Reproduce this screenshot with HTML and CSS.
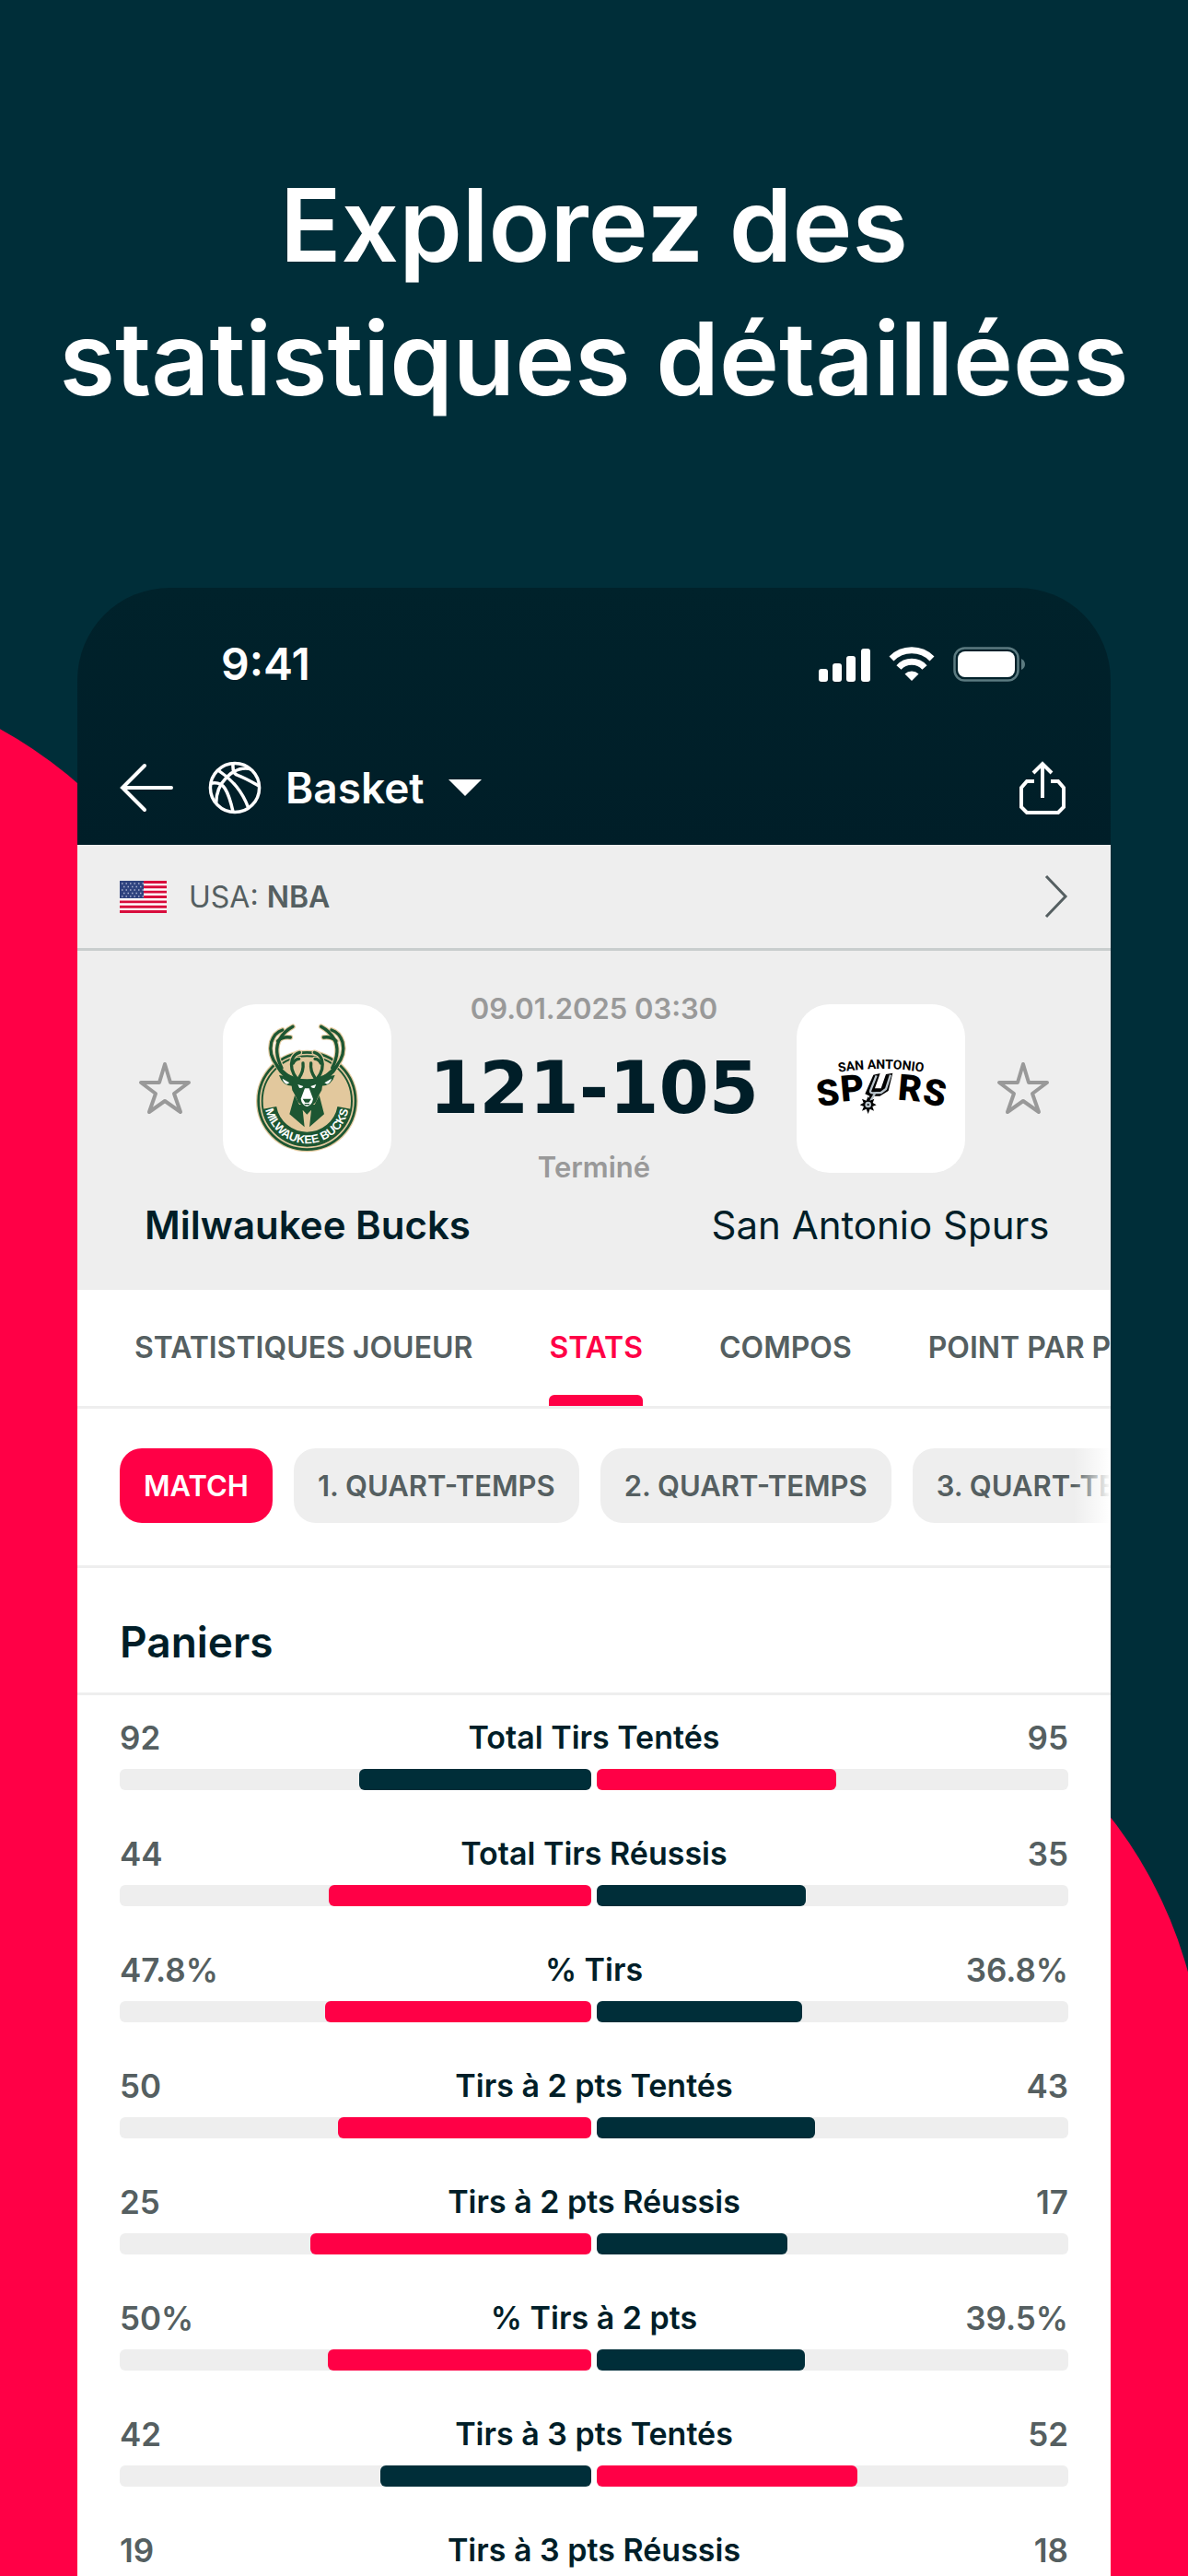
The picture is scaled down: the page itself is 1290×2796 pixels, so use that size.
FILE: index.html
```html
<!DOCTYPE html>
<html lang="fr">
<head>
    <meta charset="UTF-8">
    <meta name="viewport" content="width=device-width, initial-scale=1.0">
    <title>Statistiques détaillées</title>
    <link rel="stylesheet" href="styles.css">
</head>
<body>

<div class="stage">
    <h1>Explorez des<br>statistiques détaillées</h1>

    <main class="phone">
        <header class="top">
            <div class="status">
                <span class="time">9:41</span>
                <div class="status-icons">
                    <svg width="56" height="38" viewBox="0 0 56 38" fill="#fff">
                        <rect x="0" y="24" width="10" height="14" rx="3"/>
                        <rect x="15" y="18" width="10" height="20" rx="3"/>
                        <rect x="30" y="10" width="10" height="28" rx="3"/>
                        <rect x="46" y="2" width="10" height="36" rx="3"/>
                    </svg>
                    <svg width="50" height="38" viewBox="0 0 50 38" fill="none" stroke="#fff" stroke-width="7">
                        <path d="M3 13A31 31 0 0 1 47 13"/>
                        <path d="M11 22.500A19 19 0 0 1 39 22.500"/>
                        <path d="M25 37L17.500 29.500A11 11 0 0 1 32.500 29.500Z" fill="#fff" stroke="none"/>
                    </svg>
                    <svg width="78" height="38" viewBox="0 0 78 38">
                        <rect x="1.500" y="1.500" width="69" height="35" rx="11" fill="none" stroke="#5b7a80" stroke-width="2.500"/>
                        <rect x="5" y="5" width="62" height="28" rx="8" fill="#fff"/>
                        <path d="M74 13q4 2 4 6t-4 6z" fill="#5b7a80"/>
                    </svg>
                </div>
            </div>
            <nav class="nav">
                <button class="icon-btn" aria-label="Retour">
                    <svg width="58" height="58" viewBox="0 0 58 58" fill="none" stroke="#fff" stroke-width="4" stroke-linecap="round">
                        <path d="M27 5L3 29L27 53M3 29H56"/>
                    </svg>
                </button>
                <button class="sport">
                    <svg width="58" height="58" viewBox="0 0 60 60" fill="none" stroke="#fff" stroke-width="3.600">
                        <circle cx="30" cy="30" r="27.500"/>
                        <path d="M3 25Q14 23 19 31T28 57"/>
                        <path d="M12 11Q24 19 32 29T45 52"/>
                        <path d="M9 47Q9 30 21 18T48 9"/>
                        <path d="M28 3Q27 14 33 16T57 28"/>
                    </svg>
                    <span>Basket</span>
                    <svg width="36" height="18" viewBox="0 0 36 18" fill="#fff"><path d="M0 0H36L18 18Z"/></svg>
                </button>
                <button class="icon-btn share" aria-label="Partager">
                    <svg width="50" height="58" viewBox="0 0 50 58" fill="none" stroke="#fff" stroke-width="4">
                        <path d="M16 22H8L2 29V50L8 56H42L48 50V29L42 22H34"/>
                        <path d="M25 40V3M15 13L25 3L35 13"/>
                    </svg>
                </button>
            </nav>
        </header>

        <a class="league" href="#">
            <svg width="51" height="35" viewBox="0 0 51 35">
                <rect width="51" height="35" fill="#fff"/>
                <path d="M0 1.500H51M0 6.800H51M0 12.100H51M0 17.500H51M0 22.900H51M0 28.200H51M0 33.500H51" stroke="#d80c3c" stroke-width="2.900"/>
                <rect width="26" height="19" fill="#2f437f"/>
                <path d="M2 3H26M4 6.500H26M2 10H26M4 13.500H26M2 17H26" stroke="#a9b3d2" stroke-width="1.500" stroke-dasharray="1.500 3"/>
            </svg>
            <span class="league-name">USA: <b>NBA</b></span>
            <svg width="26" height="48" viewBox="0 0 26 48" fill="none" stroke="#555f61" stroke-width="3"><path d="M2 2L23 24L2 46"/></svg>
        </a>

        <section class="match">
            <div class="match-row">
                <button class="icon-btn" aria-label="Suivre Milwaukee Bucks">
                    <svg width="58" height="58" viewBox="0 0 58 58" fill="none" stroke="#999" stroke-width="4" stroke-linejoin="round">
                        <path d="M29 3L35 23H55L39 35L46 55L29 43L12 55L19 35L3 23H23Z"/>
                    </svg>
                </button>
                <div class="logo">
                    <svg viewBox="337 88 547 549" role="img" aria-label="Milwaukee Bucks">
                        <circle cx="610" cy="403" r="166" fill="#e2c89d"/>
                        <circle cx="610" cy="403" r="158" fill="none" stroke="#1c5632" stroke-width="8"/>
                        <circle cx="610" cy="403" r="146" fill="none" stroke="#1c5632" stroke-width="6"/>
                        <path d="M489 425A123 123 0 0 0 731 425" fill="none" stroke="#1c5632" stroke-width="44"/>
                        <path id="bucksArc" d="M475 432A138 138 0 0 0 745 432" fill="none"/>
                        <text class="bucks-text"><textPath href="#bucksArc" startOffset="50%">MILWAUKEE BUCKS</textPath></text>
                        <defs>
                            <g id="antler">
                                <path d="M582 340C530 315 480 270 494 212Q504 180 530 172"/>
                                <path d="M528 296Q500 240 521 202Q536 176 564 161"/>
                                <path d="M515 208Q530 192 556 196"/>
                                <path d="M578 332Q552 300 562 268Q568 250 586 245"/>
                                <path d="M565 280Q572 266 584 266"/>
                                <path d="M584 328Q600 305 597 280"/>
                            </g>
                        </defs>
                        <g fill="none" stroke="#e2c89d" stroke-width="17" stroke-linecap="round">
                            <use href="#antler"/>
                            <use href="#antler" transform="translate(1220 0) scale(-1 1)"/>
                        </g>
                        <g fill="none" stroke="#1c5632" stroke-width="10" stroke-linecap="round">
                            <use href="#antler"/>
                            <use href="#antler" transform="translate(1220 0) scale(-1 1)"/>
                        </g>
                        <path d="M500 270Q520 310 570 324Q610 340 650 324Q700 310 720 270Q708 315 662 340L658 368Q645 390 640 405Q625 422 610 422Q595 422 580 405Q575 390 562 368L558 340Q512 315 500 270Z" fill="#1c5632"/>
                        <path d="M519 319L565 326L562 354Q530 354 519 319ZM701 319L655 326L658 354Q690 354 701 319Z" fill="#1c5632"/>
                        <path d="M530 330L553 344L545 348Q533 344 530 330ZM690 330L667 344L675 348Q687 344 690 330Z" fill="#fff"/>
                        <path d="M570 384L553 446L602 488L596 432L610 447L624 432L618 488L666 446L650 384L635 415H585Z" fill="#1c5632"/>
                        <path d="M603 362H617L630 396Q627 416 610 421Q593 416 590 396Z" fill="#fff"/>
                        <path d="M596 396H624L616 408H604ZM602 412H618V416H602Z" fill="#1c5632"/>
                        <path d="M580 349L598 355Q594 363 585 360ZM640 349L622 355Q626 363 635 360Z" fill="#fff"/>
                    </svg>
                </div>
                <div class="result">
                    <span class="muted">09.01.2025 03:30</span>
                    <strong class="score">121-105</strong>
                    <span class="muted">Terminé</span>
                </div>
                <div class="logo">
                    <svg viewBox="76 88 547 549" role="img" aria-label="San Antonio Spurs">
                        <path id="spursArc" d="M198 312Q350 284 502 312" fill="none"/>
                        <text class="spurs-city"><textPath href="#spursArc" startOffset="50%">SAN ANTONIO</textPath></text>
                        <g class="spurs-text">
                            <text x="176" y="417" transform="rotate(-9 176 375)">S</text>
                            <text x="256" y="402" transform="rotate(-5 256 360)">P</text>
                            <text x="445" y="402" transform="rotate(5 445 360)">R</text>
                            <text x="525" y="417" transform="rotate(9 525 375)">S</text>
                        </g>
                        <path d="M325 318L347 313L330 362H350L366 316L388 312L374 370L346 387H326L316 407L305 403L313 387L298 380Z" fill="#000"/>
                        <path d="M335 320L316 368Q312 376 322 377L350 376L366 364L381 318M330 379L310 412" fill="none" stroke="#b9c4cb" stroke-width="7"/>
                        <path d="M308 388L314 402L328 396L323 409L335 416L322 421L327 435L314 429L308 445L302 429L288 435L294 421L281 416L293 409L288 396L302 402Z" fill="#000"/>
                        <circle cx="308" cy="415" r="10" fill="#b9c4cb"/>
                        <circle cx="308" cy="415" r="3" fill="#000"/>
                    </svg>
                </div>
                <button class="icon-btn" aria-label="Suivre San Antonio Spurs">
                    <svg width="58" height="58" viewBox="0 0 58 58" fill="none" stroke="#999" stroke-width="4" stroke-linejoin="round">
                        <path d="M29 3L35 23H55L39 35L46 55L29 43L12 55L19 35L3 23H23Z"/>
                    </svg>
                </button>
            </div>
            <div class="teams">
                <span class="winner">Milwaukee Bucks</span>
                <span>San Antonio Spurs</span>
            </div>
        </section>

        <nav class="tabs">
            <a href="#">STATISTIQUES JOUEUR</a>
            <a href="#" class="active">STATS</a>
            <a href="#">COMPOS</a>
            <a href="#">POINT PAR POINT</a>
        </nav>

        <div class="filters">
            <button class="chip selected">MATCH</button>
            <button class="chip">1. QUART-TEMPS</button>
            <button class="chip">2. QUART-TEMPS</button>
            <button class="chip">3. QUART-TEMPS</button>
        </div>

        <h2>Paniers</h2>

        <section class="stats">
            <div class="stat">
                <div class="stat-text"><span>92</span><span class="label">Total Tirs Tentés</span><span>95</span></div>
                <div class="bars"><div class="bar home"><i style="width: 49.2%"></i></div><div class="bar"><i class="best" style="width: 50.8%"></i></div></div>
            </div>
            <div class="stat">
                <div class="stat-text"><span>44</span><span class="label">Total Tirs Réussis</span><span>35</span></div>
                <div class="bars"><div class="bar home"><i class="best" style="width: 55.7%"></i></div><div class="bar"><i style="width: 44.3%"></i></div></div>
            </div>
            <div class="stat">
                <div class="stat-text"><span>47.8%</span><span class="label">% Tirs</span><span>36.8%</span></div>
                <div class="bars"><div class="bar home"><i class="best" style="width: 56.5%"></i></div><div class="bar"><i style="width: 43.5%"></i></div></div>
            </div>
            <div class="stat">
                <div class="stat-text"><span>50</span><span class="label">Tirs à 2 pts Tentés</span><span>43</span></div>
                <div class="bars"><div class="bar home"><i class="best" style="width: 53.8%"></i></div><div class="bar"><i style="width: 46.2%"></i></div></div>
            </div>
            <div class="stat">
                <div class="stat-text"><span>25</span><span class="label">Tirs à 2 pts Réussis</span><span>17</span></div>
                <div class="bars"><div class="bar home"><i class="best" style="width: 59.5%"></i></div><div class="bar"><i style="width: 40.5%"></i></div></div>
            </div>
            <div class="stat">
                <div class="stat-text"><span>50%</span><span class="label">% Tirs à 2 pts</span><span>39.5%</span></div>
                <div class="bars"><div class="bar home"><i class="best" style="width: 55.9%"></i></div><div class="bar"><i style="width: 44.1%"></i></div></div>
            </div>
            <div class="stat">
                <div class="stat-text"><span>42</span><span class="label">Tirs à 3 pts Tentés</span><span>52</span></div>
                <div class="bars"><div class="bar home"><i style="width: 44.7%"></i></div><div class="bar"><i class="best" style="width: 55.3%"></i></div></div>
            </div>
            <div class="stat">
                <div class="stat-text"><span>19</span><span class="label">Tirs à 3 pts Réussis</span><span>18</span></div>
                <div class="bars"><div class="bar home"><i class="best" style="width: 51.4%"></i></div><div class="bar"><i style="width: 48.6%"></i></div></div>
            </div>
        </section>
    </main>
</div>

</body>
</html>
```

FILE: styles.css
```css
* {
    box-sizing: border-box;
}
body {
    margin: 0;
    background-color: #002e39;
    color: #001e28;
    font-family: Inter, "Liberation Sans", sans-serif;
}
button {
    border: none;
    padding: 0;
    background: none;
    color: inherit;
    font: inherit;
    cursor: pointer;
}
a {
    color: inherit;
    text-decoration: none;
}
svg {
    display: block;
    flex: none;
}
.stage {
    position: relative;
    z-index: 0;
    height: 100vh;
    overflow: hidden;
    padding: 172px 84px 0;
}
/* red shapes behind the phone */
.stage::before,
.stage::after {
    content: "";
    position: absolute;
    z-index: -1;
    bottom: 0;
    width: 960px;
    background-color: #ff0046;
    border-radius: 480px 480px 0 0;
}
.stage::before {
    left: -711px;
    top: 732px;
}
.stage::after {
    right: -17px;
    top: 1787px;
}
h1 {
    margin: 0 -84px 176px;
    color: #fff;
    font-size: 110px;
    font-weight: 600;
    line-height: 145px;
    text-align: center;
}
.phone {
    overflow: hidden;
}

/* header */
.top {
    background: linear-gradient(#00222b, #001e28);
    border-radius: 100px 100px 0 0;
    color: #fff;
    padding-bottom: 33px;
}
.status {
    display: flex;
    align-items: center;
    justify-content: space-between;
    padding: 53px 93px 0 156px;
}
.time {
    font-size: 48px;
    font-weight: 600;
    line-height: 60px;
}
.status-icons {
    display: flex;
    align-items: center;
    gap: 20px;
}
.nav {
    display: flex;
    align-items: center;
    gap: 38px;
    padding: 75px 49px 0 46px;
}
.sport {
    display: flex;
    align-items: center;
    gap: 26px;
    font-size: 46px;
    font-weight: 600;
    line-height: 58px;
}
.share {
    margin-left: auto;
}
.league {
    display: flex;
    align-items: center;
    gap: 24px;
    height: 115px;
    padding: 0 46px;
    background-color: #eee;
    border-bottom: 3px solid #c8cdcd;
    color: #555f61;
    font-size: 32px;
}
.league-name {
    flex: 1;
}
.league b {
    font-weight: 600;
}

/* match */
.match {
    padding: 43px 0 44px;
    background-color: #eee;
}
.match-row {
    display: flex;
    align-items: center;
    gap: 34px;
    padding: 0 66px;
}
.logo {
    width: 183px;
    height: 183px;
    background-color: #fff;
    border-radius: 36px;
    overflow: hidden;
}
.logo svg {
    width: 100%;
    height: 100%;
}
.bucks-text {
    fill: #fff;
    font: bold 38px "Liberation Sans", sans-serif;
    text-anchor: middle;
}
.spurs-city {
    font: bold 42px Roboto, sans-serif;
    text-anchor: middle;
}
.spurs-text {
    font: 900 118px Roboto, sans-serif;
    text-anchor: middle;
}
.result {
    flex: 1;
    display: flex;
    flex-direction: column;
    align-items: center;
    gap: 22px;
    margin: 0 -20px;
    white-space: nowrap;
}
.muted {
    color: #999;
    font-size: 31px;
    font-weight: 600;
    line-height: 40px;
}
.score {
    font-family: "DejaVu Sans", sans-serif;
    font-size: 78px;
    line-height: 88px;
}
.teams {
    display: grid;
    grid-template-columns: 1fr 1fr;
    gap: 122px;
    margin-top: 17px;
    font-size: 42px;
    line-height: 52px;
    text-align: center;
    white-space: nowrap;
}
.winner {
    font-weight: 600;
}

/* tabs and period filters */
.tabs {
    display: flex;
    gap: 83px;
    height: 129px;
    padding-left: 62px;
    background-color: #fff;
    border-bottom: 3px solid #eee;
    color: #555f61;
    font-size: 32px;
    font-weight: 600;
    line-height: 126px;
    white-space: nowrap;
}
.tabs .active {
    position: relative;
    color: #ff0046;
}
.tabs .active::after {
    content: "";
    position: absolute;
    left: 0;
    right: 0;
    bottom: 0;
    height: 12px;
    background-color: #ff0046;
    border-radius: 6px 6px 0 0;
}
.filters {
    position: relative;
    display: flex;
    gap: 23px;
    overflow: hidden;
    padding: 43px 0 46px 46px;
    background-color: #fff;
    border-bottom: 3px solid #eee;
}
.filters::after {
    content: "";
    position: absolute;
    top: 0;
    right: 0;
    bottom: 0;
    width: 40px;
    background: linear-gradient(to right, rgba(255, 255, 255, 0), #fff);
}
.chip {
    flex: none;
    padding: 0 26px;
    background-color: #eee;
    border-radius: 24px;
    color: #555f61;
    font-size: 31px;
    font-weight: 600;
    line-height: 81px;
}
.chip.selected {
    background-color: #ff0046;
    color: #fff;
}

/* statistics */
h2 {
    margin: 0;
    padding: 53px 46px 28px;
    background-color: #fff;
    border-bottom: 3px solid #eee;
    font-size: 46px;
    font-weight: 600;
    line-height: 54px;
}
.stats {
    background-color: #fff;
}
.stat {
    padding: 26px 46px 23px;
}
.stat-text {
    display: grid;
    grid-template-columns: 1fr auto 1fr;
    color: #555f61;
    font-size: 35px;
    font-weight: 600;
    line-height: 40px;
}
.stat-text span:last-child {
    text-align: right;
}
.stat-text .label {
    color: #001e28;
    font-size: 34px;
}
.bars {
    display: grid;
    grid-template-columns: 1fr 1fr;
    gap: 6px;
    margin-top: 14px;
}
.bar {
    display: flex;
    height: 23px;
    background-color: #eee;
    border-radius: 6px;
}
.bar.home {
    justify-content: flex-end;
}
.bar i {
    background-color: #002e39;
    border-radius: 6px;
}
.bar .best {
    background-color: #ff0046;
}
```
